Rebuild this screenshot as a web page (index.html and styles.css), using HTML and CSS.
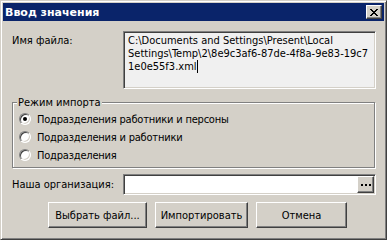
FILE: index.html
```html
<!DOCTYPE html>
<html lang="ru">
<head>
  <meta charset="UTF-8" />
  <title>Ввод значения</title>
  <link rel="stylesheet" href="styles.css">
</head>
<body>

  <div class="window">
    <!-- Title bar -->
    <div class="titlebar">
      <span class="title">Ввод значения</span>
      <button class="close">
        <svg width="8" height="7" viewBox="0 0 8 7" shape-rendering="crispEdges">
          <path d="M0 0h2v1H0zM6 0h2v1H6zM1 1h2v1H1zM5 1h2v1H5zM2 2h4v1H2zM3 3h2v1H3zM2 4h4v1H2zM1 5h2v1H1zM5 5h2v1H5zM0 6h2v1H0zM6 6h2v1H6z" fill="#000"/>
        </svg>
      </button>
    </div>

    <div class="client">
      <div class="row file-row">
        <span class="label">Имя файла:</span>
        <div class="field memo">
          <div>C:\Documents and Settings\Present\Local</div>
          <div>Settings\Temp\2\8e9c3af6-87de-4f8a-9e83-19c7</div>
          <div>1e0e55f3.xml<span class="caret"></span></div>
        </div>
      </div>

      <div class="group">
        <span class="legend">Режим импорта</span>
        <div class="radio"><span class="radio-box checked"></span>Подразделения работники и персоны</div>
        <div class="radio"><span class="radio-box"></span>Подразделения и работники</div>
        <div class="radio"><span class="radio-box"></span>Подразделения</div>
      </div>

      <div class="row org-row">
        <span class="label">Наша организация:</span>
        <div class="field combo">
          <span class="combo-input"></span>
          <span class="dots-btn">
            <svg width="10" height="2" viewBox="0 0 10 2" shape-rendering="crispEdges">
              <path d="M0 0h2v2H0zM4 0h2v2H4zM8 0h2v2H8z" fill="#000"/>
            </svg>
          </span>
        </div>
      </div>

      <div class="buttons">
        <button class="btn btn-file">Выбрать файл...</button>
        <button class="btn btn-import">Импортировать</button>
        <button class="btn btn-cancel">Отмена</button>
      </div>
    </div>
  </div>

</body>
</html>
```

FILE: styles.css
```css
* { box-sizing: border-box; }
body {
  margin: 0;
  background: #d4d0c8;
  font-family: "DejaVu Sans Condensed", "DejaVu Sans", sans-serif;
  font-size: 11px;
  color: #000;
}

/* window frame */
.window {
  width: 387px;
  height: 240px;
  padding: 2px;
  background: #d4d0c8;
  border: 1px solid;
  border-color: #d4d0c8 #404040 #404040 #d4d0c8;
  box-shadow: inset 1px 1px #fff, inset -1px -1px #808080;
}

.titlebar {
  height: 18px;
  background: #0a246a;
  display: flex;
  align-items: center;
  justify-content: space-between;
  padding: 0 2px 0 2px;
}

.title {
  color: #fff;
  font-family: "DejaVu Sans", sans-serif;
  font-weight: bold;
  font-size: 11px;
}

.close,
.dots-btn,
.btn {
  background: #d4d0c8;
  border: 1px solid;
  border-color: #fff #404040 #404040 #fff;
  box-shadow: inset -1px -1px #808080, inset 1px 1px #d4d0c8;
}

.close {
  width: 16px;
  height: 14px;
  padding: 0 1px 0 0;
  display: flex;
  align-items: center;
  justify-content: center;
}

.client {
  padding: 10px 8px 0 9px;
}

.row {
  display: flex;
}

.label {
  width: 111px;
  line-height: 13px;
}

.file-row .label {
  padding-top: 3px;
}

/* sunken edit fields */
.field {
  border: 1px solid;
  border-color: #808080 #fff #fff #808080;
  box-shadow: inset 1px 1px #404040, inset -1px -1px #d4d0c8;
}

.memo {
  width: 253px;
  height: 58px;
  background: #f0f0f0;
  padding: 2px 4px;
  line-height: 13px;
  white-space: nowrap;
}

.caret {
  display: inline-block;
  width: 1px;
  height: 13px;
  background: #000;
  vertical-align: top;
}

/* group box */
.group {
  position: relative;
  width: 363px;
  height: 66px;
  margin-top: 13px;
  padding: 7px 0 0 6px;
  border: 1px solid #808080;
  box-shadow: inset 1px 1px #fff, 1px 1px #fff;
}

.legend {
  position: absolute;
  top: -7px;
  left: 4px;
  padding: 0 1px;
  background: #d4d0c8;
  line-height: 13px;
}

.radio {
  height: 18px;
  display: flex;
  align-items: center;
  gap: 6px;
  letter-spacing: -0.2px;
}

.radio-box {
  position: relative;
  width: 12px;
  height: 12px;
  border-radius: 50%;
  background: #fff;
  border: 1px solid;
  border-color: #808080 #fff #fff #808080;
  box-shadow: inset 1px 1px #404040, inset -1px -1px #d4d0c8;
}

.radio-box.checked::after {
  content: "";
  position: absolute;
  top: 3px;
  left: 3px;
  width: 4px;
  height: 4px;
  border-radius: 50%;
  background: #000;
}

.org-row {
  margin-top: 6px;
  align-items: center;
}

.combo {
  width: 253px;
  height: 21px;
  padding: 1px;
  display: flex;
  background: #fff;
}

.combo-input {
  flex: 1;
}

.dots-btn {
  width: 17px;
  height: 17px;
  display: flex;
  align-items: center;
  justify-content: center;
  padding-top: 1px;
}

.buttons {
  display: flex;
  gap: 8px;
  margin-top: 7px;
  padding-left: 36px;
}

.btn {
  height: 26px;
  padding: 0;
  font-family: inherit;
  font-size: 11px;
  color: #000;
}

.btn-file { width: 99px; }
.btn-import { width: 93px; }
.btn-cancel { width: 91px; }
```
